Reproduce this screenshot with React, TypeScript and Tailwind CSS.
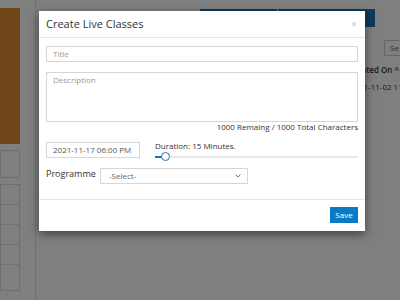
import React from 'react';

const App: React.FC = () => {
  return (
    <div className="relative w-[400px] h-[300px] overflow-hidden bg-white font-['Open_Sans',sans-serif]">
      {/* page under the modal */}
      <div className="flex h-full">
        <div className="w-[20px] flex flex-col pt-[8px] gap-[6px]">
          <div className="h-[136px] bg-[#dc8a2c]"></div>
          <div className="h-[28px] border border-[#ddd]"></div>
          <div className="h-[107px] border border-[#ddd] flex flex-col">
            <div className="h-[20px] border-b border-[#e5e5e5]"></div>
            <div className="h-[20px] border-b border-[#e5e5e5]"></div>
            <div className="h-[20px] border-b border-[#e5e5e5]"></div>
            <div className="h-[20px] border-b border-[#e5e5e5]"></div>
          </div>
        </div>
        <div className="flex-1 ml-[15px] border-l border-[#e5e5e5] pl-[2px] flex flex-col">
          <div className="flex justify-end pt-[9px] pr-[25px]">
            <div className="w-[77px] h-[18px] bg-[#1d74b4] mr-[1px]"></div>
            <div className="w-[97px] h-[18px] bg-[#1d74b4]"></div>
          </div>
          <div className="flex justify-end mt-[13px] -mr-[6px]">
            <div className="w-[22px] h-[16px] border border-[#ccc] text-[8px] text-[#666] pl-[5px] leading-[14px] overflow-hidden whitespace-nowrap">Se</div>
          </div>
          <div className="flex justify-end mt-[8px] pr-[1px] text-[8px] text-[#333] font-semibold whitespace-nowrap">
            <span>Created On ^</span>
          </div>
          <div className="flex mt-[5px] text-[8px] text-[#333] whitespace-nowrap">
            <span>1</span>
            <span className="ml-auto -mr-[14px]">2021-11-02 11:30</span>
          </div>
          <div className="mt-[16px] text-[8px] text-[#333]">1</div>
        </div>
      </div>

      {/* backdrop */}
      <div className="absolute inset-0 bg-black/50"></div>

      {/* modal */}
      <div className="absolute left-[39px] top-[11px] w-[326px] h-[220px] bg-white shadow-[0_3px_9px_rgba(0,0,0,0.5)] flex flex-col">
        <div className="h-[27px] px-[7px] flex items-center justify-between border-b border-[#e5e5e5]">
          <span className="text-[11px] text-[#333]">Create Live Classes</span>
          <span className="text-[10px] text-[#c8c8c8] leading-none mr-[1px]">×</span>
        </div>

        <div className="px-[7px] pt-[8px] flex flex-col">
          <div className="h-[16px] border border-[#d6d6d6] pl-[6px] flex items-center text-[8px] text-[#999]">Title</div>
          <div className="h-[50px] mt-[10px] border border-[#d6d6d6] pl-[6px] pt-[1px] text-[8px] text-[#999]">Description</div>
          <div className="text-right text-[8px] text-[#333] leading-[10px]">1000 Remaing / 1000 Total Characters</div>

          <div className="flex mt-[10px]">
            <div className="w-[94px] h-[16px] border border-[#d6d6d6] pl-[6px] flex items-center text-[8px] text-[#555]">2021-11-17 06:00 PM</div>
            <div className="flex-1 ml-[15px] flex flex-col">
              <span className="text-[8px] text-[#333] leading-[10px] -mt-[1px]">Duration: 15 Minutes.</span>
              <div className="relative h-[9px] mt-[1px] flex items-center">
                <div className="w-full h-[2px] bg-[#e8e8e8]"></div>
                <div className="absolute left-0 w-[8px] h-[2px] bg-[#1a73b8]"></div>
                <div className="absolute left-[6px] w-[9px] h-[9px] rounded-full bg-white border border-[#1a73b8]"></div>
              </div>
            </div>
          </div>

          <div className="flex items-center mt-[7px]">
            <span className="w-[54px] text-[9px] text-[#333] -mt-[4px]">Programme</span>
            <div className="w-[148px] h-[16px] border border-[#d6d6d6] pl-[8px] pr-[6px] flex items-center justify-between text-[8px] text-[#666]">
              <span>-Select-</span>
              <svg width="6" height="4" viewBox="0 0 6 4" fill="none" stroke="#777" strokeWidth="1">
                <path d="M0.5 0.5L3 3L5.5 0.5" />
              </svg>
            </div>
          </div>
        </div>

        <div className="mt-[15px] border-t border-[#e5e5e5] flex justify-end px-[7px] pt-[7px]">
          <button className="w-[28px] h-[16px] bg-[#0a7bc2] text-white text-[8px] flex items-center justify-center">Save</button>
        </div>
      </div>
    </div>
  );
};

export default App;
